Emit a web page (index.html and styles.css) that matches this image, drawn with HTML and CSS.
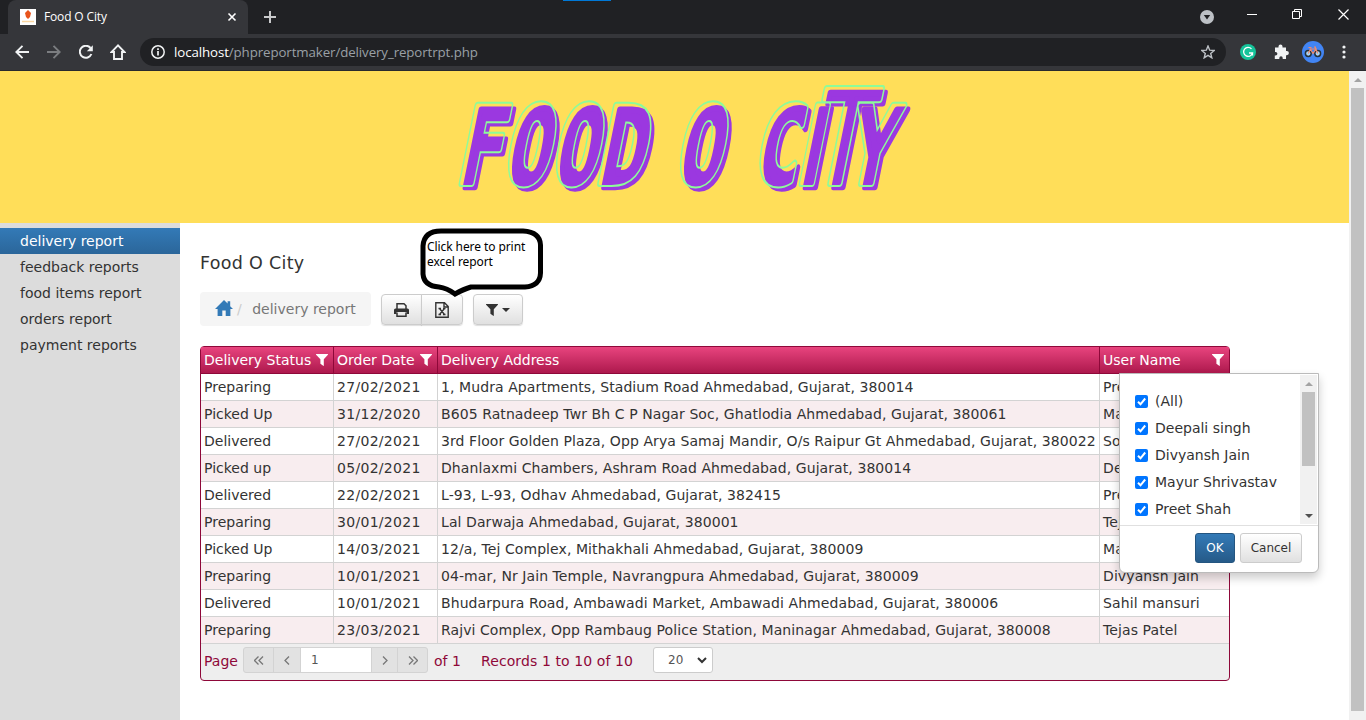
FILE: index.html
```html
<!DOCTYPE html>
<html lang="en">
<head>
<meta charset="utf-8">
<title>Food O City</title>
<link rel="stylesheet" href="styles.css">
</head>
<body>
<svg class="defs" width="0" height="0">
  <defs>
    <path id="funnel" d="M.3 0h11.400c.4 0 .4.5.2.8L7.800 5.200v6.200c0 .5-.3.6-.6.4L4.400 9.700V5.200L.1.8C-.1.5 0 0 .3 0z"/>
    <g id="logo" class="logo" transform="translate(0 112) skewX(-11.5)">
      <text x="-4" y="0" textLength="44" lengthAdjust="spacingAndGlyphs">F</text>
      <text x="43" y="0" textLength="45" lengthAdjust="spacingAndGlyphs">O</text>
      <text x="91" y="0" textLength="45" lengthAdjust="spacingAndGlyphs">O</text>
      <text x="136" y="0" textLength="47" lengthAdjust="spacingAndGlyphs">D</text>
      <text x="215" y="0" textLength="45" lengthAdjust="spacingAndGlyphs">O</text>
      <text x="292" y="0" textLength="45" lengthAdjust="spacingAndGlyphs">C</text>
      <text class="plain" x="338" y="0" textLength="20" lengthAdjust="spacingAndGlyphs">I</text>
      <text class="tall" x="346" y="0" textLength="60" lengthAdjust="spacingAndGlyphs">T</text>
      <text x="385" y="0" textLength="45" lengthAdjust="spacingAndGlyphs">Y</text>
    </g>
    <mask id="rim" maskUnits="userSpaceOnUse" x="-10" y="0" width="490" height="140">
      <rect x="-10" width="490" height="140" fill="#fff"/>
      <use href="#logo" class="logo-cut"/>
    </mask>
  </defs>
</svg>
<div class="browser">
  <div class="tabs">
    <div class="tab">
      <svg width="16" height="16"><rect width="16" height="16" fill="#fff"/><path d="M8 1l3 3-1 4-2 2-2-2-1-4z" fill="#e8541c"/><path d="M2 12.500h12" stroke="#fbd6a0" stroke-width="1.500"/></svg>
      <span class="tab-title">Food O City</span>
      <svg width="10" height="10"><path d="M1.500 1.500l7 7m0-7l-7 7" stroke="#fff" stroke-width="1.600"/></svg>
    </div>
    <svg class="plus" width="12" height="12"><path d="M6 0v12M0 6h12" stroke="#c9cacc" stroke-width="2"/></svg>
    <div class="wincontrols">
      <svg width="14" height="14"><circle cx="7" cy="7" r="7" fill="#bdc1c6"/><path d="M3.800 5h6.400L7 9.500z" fill="#202124"/></svg>
      <svg width="10" height="10"><path d="M0 4.500h10" stroke="#fff"/></svg>
      <svg width="11" height="11"><path d="M.5 2.500h7v7h-7zM2.500 2.500v-2h7v7h-2" fill="none" stroke="#fff"/></svg>
      <svg width="11" height="11"><path d="M.5.5l10 10m0-10l-10 10" stroke="#fff" stroke-width="1.200"/></svg>
    </div>
    <div class="strip"></div>
  </div>
  <div class="toolbar">
    <svg width="14" height="14"><path d="M14 7H1.500M7.500.8L1.300 7l6.200 6.200" fill="none" stroke="#f1f3f4" stroke-width="1.900"/></svg>
    <svg width="14" height="14"><path d="M0 7h12.500M6.500.8L12.700 7l-6.200 6.200" fill="none" stroke="#7b7d80" stroke-width="1.900"/></svg>
    <svg width="14" height="14"><path d="M12.400 9A6 6 0 1 1 11.500 3" fill="none" stroke="#f1f3f4" stroke-width="2"/><path d="M13.800.3v6H7.800z" fill="#f1f3f4"/></svg>
    <svg width="16" height="16"><path d="M8 1.400L1.500 8H4v7h8V8h2.500z" fill="none" stroke="#f1f3f4" stroke-width="1.900"/></svg>
    <div class="omnibox">
      <svg width="14" height="14"><circle cx="7" cy="7" r="6.200" fill="none" stroke="#f1f3f4" stroke-width="1.500"/><path d="M7 6v4.500M7 3.200v1.700" stroke="#f1f3f4" stroke-width="1.700"/></svg>
      <span class="url"><b>localhost</b>/phpreportmaker/delivery_reportrpt.php</span>
      <svg width="14" height="14"><path d="M7 1l1.700 4.200 4.500.3-3.500 2.900 1.100 4.400L7 10.400l-3.800 2.400 1.100-4.400L.8 5.500l4.500-.3z" fill="none" stroke="#bdc1c6" stroke-width="1.400"/></svg>
    </div>
    <div class="extensions">
      <svg width="16" height="16"><circle cx="8" cy="8" r="8" fill="#15c39a"/><path d="M11.500 4.900A4.500 4.500 0 1 0 12.500 9H9M12.500 8.500v3" fill="none" stroke="#fff" stroke-width="1.300"/></svg>
      <svg width="15" height="16"><path d="M1 3.500h3.500v-1a2 2 0 0 1 4 0v1H12V7h.8a2 2 0 0 1 0 4.200H12V15H8.700v-1a1.700 1.700 0 0 0-3.400 0v1H.8v-3.500h.8a1.800 1.800 0 0 0 0-3.600H1z" fill="#f1f3f4"/></svg>
      <svg width="22" height="22"><circle cx="11" cy="11" r="11" fill="#4285f4"/><g fill="#a8d4f5" stroke="#263238" stroke-width="1.500"><circle cx="6.300" cy="12.500" r="2.900"/><circle cx="15.700" cy="12.500" r="2.900"/></g><path d="M6.300 12.500L8.500 8h5.500l-3 4.500L8 7.500M13 6l2.700 6.500M6.500 6.500h3M12 6h2" fill="none" stroke="#f08a6a" stroke-width="1.200"/></svg>
      <svg width="4" height="14"><g fill="#f1f3f4"><circle cx="2" cy="2" r="1.600"/><circle cx="2" cy="7" r="1.600"/><circle cx="2" cy="12" r="1.600"/></g></svg>
    </div>
  </div>
</div>
<div class="viewport">
  <div class="page">
    <header class="banner">
      <svg width="470" height="140">
        <use href="#logo" x="3.500" y="4" class="logo-fill"/>
        <g mask="url(#rim)"><use href="#logo" class="logo-line"/></g>
      </svg>
    </header>
    <div class="body">
      <nav class="menu">
        <a class="item active">delivery report</a>
        <a class="item">feedback reports</a>
        <a class="item">food items report</a>
        <a class="item">orders report</a>
        <a class="item">payment reports</a>
      </nav>
      <main class="content">
        <h1 class="title">Food O City</h1>
        <div class="tools">
          <div class="crumb">
            <svg width="18" height="16"><path d="M9 0l3.600 3.600V1.200h2.600v5L18 9h-2.600v7h-4.700v-5.500H7.300V16H2.600V9H0z" fill="#337ab7"/></svg>
            <span class="slash">/</span><span>delivery report</span>
          </div>
          <div class="group">
            <button class="btn"><svg width="15" height="14"><path d="M3 6V.8h7l2 2V6" fill="none" stroke="#333" stroke-width="1.500"/><path d="M1.500 5.500h12Q15 5.500 15 7v4h-2.500V9h-10v2H0V7q0-1.500 1.500-1.500z" fill="#333"/><path d="M3 9.500v3.700h9V9.500" fill="none" stroke="#333" stroke-width="1.500"/></svg></button>
            <button class="btn"><svg width="14" height="16"><path d="M.8.8h8.700l3.700 3.700v10.700H.8zM9 1v4h4" fill="none" stroke="#333" stroke-width="1.400"/><path d="M4.500 6.500l5 6M9.500 6.500l-5 6M3.500 6.500H6M8 6.500h2.500M3.500 12.500H6M8 12.500h2.500" stroke="#333" stroke-width="1.300"/></svg></button>
          </div>
          <button class="btn filter"><svg width="12" height="12" fill="#333"><use href="#funnel"/></svg><i class="caret"></i></button>
        </div>
        <div class="grid">
          <table class="report">
            <colgroup><col class="c1"><col class="c2"><col class="c3"><col class="c4"></colgroup>
            <thead><tr>
              <th><div class="head">Delivery Status<svg width="12" height="12"><use href="#funnel"/></svg></div></th>
              <th><div class="head">Order Date<svg width="12" height="12"><use href="#funnel"/></svg></div></th>
              <th>Delivery Address</th>
              <th><div class="head last">User Name<svg width="12" height="12"><use href="#funnel"/></svg></div></th>
            </tr></thead>
            <tbody>
              <tr><td>Preparing</td><td>27/02/2021</td><td>1, Mudra Apartments, Stadium Road Ahmedabad, Gujarat, 380014</td><td>Preet Shah</td></tr>
              <tr><td>Picked Up</td><td>31/12/2020</td><td>B605 Ratnadeep Twr Bh C P Nagar Soc, Ghatlodia Ahmedabad, Gujarat, 380061</td><td>Mayur</td></tr>
              <tr><td>Delivered</td><td>27/02/2021</td><td>3rd Floor Golden Plaza, Opp Arya Samaj Mandir, O/s Raipur Gt Ahmedabad, Gujarat, 380022</td><td>Sonal</td></tr>
              <tr><td>Picked up</td><td>05/02/2021</td><td>Dhanlaxmi Chambers, Ashram Road Ahmedabad, Gujarat, 380014</td><td>Deepali</td></tr>
              <tr><td>Delivered</td><td>22/02/2021</td><td>L-93, L-93, Odhav Ahmedabad, Gujarat, 382415</td><td>Preet Shah</td></tr>
              <tr><td>Preparing</td><td>30/01/2021</td><td>Lal Darwaja Ahmedabad, Gujarat, 380001</td><td>Tejas Patel</td></tr>
              <tr><td>Picked Up</td><td>14/03/2021</td><td>12/a, Tej Complex, Mithakhali Ahmedabad, Gujarat, 380009</td><td>Mayur</td></tr>
              <tr><td>Preparing</td><td>10/01/2021</td><td>04-mar, Nr Jain Temple, Navrangpura Ahmedabad, Gujarat, 380009</td><td>Divyansh Jain</td></tr>
              <tr><td>Delivered</td><td>10/01/2021</td><td>Bhudarpura Road, Ambawadi Market, Ambawadi Ahmedabad, Gujarat, 380006</td><td>Sahil mansuri</td></tr>
              <tr><td>Preparing</td><td>23/03/2021</td><td>Rajvi Complex, Opp Rambaug Police Station, Maninagar Ahmedabad, Gujarat, 380008</td><td>Tejas Patel</td></tr>
            </tbody>
          </table>
          <div class="pager">
            <span class="label">Page</span>
            <div class="pages">
              <span class="pg wide"><svg width="10" height="9"><path d="M4.500.5l-4 4 4 4M9 .5l-4 4 4 4"/></svg></span>
              <span class="pg"><svg width="6" height="9"><path d="M5 .5l-4 4 4 4"/></svg></span>
              <span class="num">1</span>
              <span class="pg"><svg width="6" height="9"><path d="M1 .5l4 4-4 4"/></svg></span>
              <span class="pg wide"><svg width="10" height="9"><path d="M1 .5l4 4-4 4M5.500.5l4 4-4 4"/></svg></span>
            </div>
            <span class="of">of 1</span>
            <span class="records">Records 1 to 10 of 10</span>
            <span class="size">20<svg width="10" height="7"><path d="M1 1l4 4 4-4" fill="none" stroke="#333" stroke-width="2"/></svg></span>
          </div>
          <div class="popup">
            <div class="options">
              <div class="list">
                <div class="opt"><i class="check"><svg width="13" height="13"><path d="M3 6.800l2.500 2.500L10.200 3.500"/></svg></i>(All)</div>
                <div class="opt"><i class="check"><svg width="13" height="13"><path d="M3 6.800l2.500 2.500L10.200 3.500"/></svg></i>Deepali singh</div>
                <div class="opt"><i class="check"><svg width="13" height="13"><path d="M3 6.800l2.500 2.500L10.200 3.500"/></svg></i>Divyansh Jain</div>
                <div class="opt"><i class="check"><svg width="13" height="13"><path d="M3 6.800l2.500 2.500L10.200 3.500"/></svg></i>Mayur Shrivastav</div>
                <div class="opt"><i class="check"><svg width="13" height="13"><path d="M3 6.800l2.500 2.500L10.200 3.500"/></svg></i>Preet Shah</div>
              </div>
              <div class="bar inner"><i class="up"></i><i class="thumb"></i><i class="down"></i></div>
            </div>
            <div class="actions"><button class="ok">OK</button><button class="cancel">Cancel</button></div>
          </div>
        </div>
        <div class="callout">
          <svg width="126" height="72"><path d="M4 19Q5 4 22 4H104Q121 5 121.500 18V46Q121 59 106 60H52Q45 62 36 67Q28 61 20 60Q5 59 4 47z" fill="#fff" stroke="#000" stroke-width="5"/></svg>
          <p class="note">Click here to print<br>excel report</p>
        </div>
      </main>
    </div>
  </div>
  <div class="bar outer"><i class="up"></i><i class="thumb"></i></div>
</div>
</body>
</html>
```

FILE: styles.css
```css
* { box-sizing: border-box; }
body { margin: 0; height: 720px; overflow: hidden; display: flex; flex-direction: column; background: #fff; color: #333; font: 14px/20px "DejaVu Sans", sans-serif; }
svg { display: block; flex: none; }
.defs { position: absolute; }
.browser { flex: none; height: 71px; background: #35363a; border-bottom: 1px solid #292a2d; font-family: "Open Sans", sans-serif; }
.tabs { position: relative; height: 34px; padding-left: 8px; display: flex; align-items: center; background: #202124; }
.tab { width: 240px; height: 34px; padding: 0 11px 0 12px; display: flex; align-items: center; gap: 8px; border-radius: 8px 8px 0 0; background: #35363a; }
.tab-title { flex: 1; color: #fff; font-size: 12px; letter-spacing: -.15px; }
.plus { margin-left: 16px; }
.wincontrols { margin-left: auto; padding-right: 17px; display: flex; align-items: center; gap: 35px; height: 29px; align-self: flex-start; }
.wincontrols svg:first-child { margin: 5px -2px 0 0; }
.strip { position: absolute; left: 563px; top: 0; width: 48px; height: 1px; background: #0078d7; }
.toolbar { height: 36px; padding-left: 15px; display: flex; align-items: center; gap: 18px; }
.toolbar > svg:nth-child(4) { margin-left: -1px; }
.omnibox { width: 1086px; height: 28px; margin-left: -4px; padding: 0 11px; border-radius: 14px; display: flex; align-items: center; gap: 9px; background: #202124; }
.url { flex: 1; color: #9aa0a6; font-size: 13.300px; letter-spacing: -.1px; }
.url b { color: #fff; font-weight: 400; }
.extensions { flex: 1; display: flex; align-items: center; padding: 0 20px 0 0; margin-left: -4px; justify-content: space-between; }
.extensions svg:nth-child(3) { margin-left: -4px; }
.viewport { flex: 1; display: flex; min-height: 0; }
.page { flex: 1; display: flex; flex-direction: column; }
.banner { height: 152px; flex: none; padding-left: 459px; background: #ffde59; }
.banner svg { overflow: visible; }
.logo { font: 700 106px "DejaVu Sans Mono", monospace; stroke-linejoin: round; }
.plain { font: 900 109px Roboto, sans-serif; }
.tall { font: 400 132px Roboto, sans-serif; }
.logo-fill { fill: #9b38e0; stroke: #9b38e0; stroke-width: 6.500px; }
.logo-line { fill: #8dfb9a; stroke: #8dfb9a; stroke-width: 8px; }
.logo-cut { fill: #000; stroke: #000; stroke-width: 4px; }
.body { flex: 1; display: flex; }
.menu { width: 180px; padding-top: 5px; background: #dcdcdc; }
.item { display: block; height: 26px; padding-left: 20px; line-height: 26px; }
.active { color: #fff; background: linear-gradient(#337ab7, #2b669a); }
.content { flex: 1; position: relative; padding: 30px 0 0 20px; }
.title { margin: 0; font-size: 17.500px; line-height: 20px; font-weight: 400; letter-spacing: .3px; }
.tools { display: flex; gap: 10px; margin: 19px 0 20px; }
.crumb { width: 171px; height: 34px; padding-left: 15px; display: flex; align-items: center; border-radius: 4px; background: #f5f5f5; color: #777; }
.crumb svg { margin-bottom: 3px; }
.slash { color: #ccc; padding: 0 10.500px 0 4px; }
.group { display: flex; }
.btn { width: 41px; height: 31px; margin-top: 2px; padding: 0; display: flex; align-items: center; justify-content: center; border: 1px solid #ccc; background: linear-gradient(#fff, #e0e0e0); border-radius: 4px; box-shadow: 0 1px 1px #0002; }
.group .btn:first-child { border-radius: 4px 0 0 4px; }
.group .btn:last-child { width: 42px; margin-left: -1px; border-radius: 0 4px 4px 0; }
.filter { width: 50px; gap: 4px; }
.caret { border: 4px solid transparent; border-top-color: #333; border-bottom: 0; }
.grid { position: relative; width: 1030px; height: 335px; border: 1px solid #8e0839; border-radius: 4px; background: #eee; }
.report { width: 1028px; table-layout: fixed; border-collapse: separate; border-spacing: 0; white-space: nowrap; }
.c1 { width: 133px; } .c2 { width: 104px; } .c3 { width: 662px; } .c4 { width: 129px; }
.report th { height: 27px; padding: 0 3px; border-right: 1px solid #8e0839; border-bottom: 1px solid #8e0839; text-align: left; font-weight: 400; color: #fff; }
.report thead tr { background: linear-gradient(#e8447e, #ab174b); }
.report td { height: 27px; padding: 0 3px; background: #fff; border-right: 1px solid #d3d3d3; border-bottom: 1px solid #d3d3d3; }
.report td:nth-child(2) { letter-spacing: .3px; }
.report td:nth-child(3) { letter-spacing: .08px; }
.report td:nth-child(4) { letter-spacing: .1px; }
.report tr > :last-child { border-right: 0; }
.report tbody tr:nth-child(even) td { background: #f8edef; }
.head { display: flex; align-items: center; gap: 5px; fill: #fff; }
.last { justify-content: space-between; padding-right: 2px; }
.pager { height: 36px; padding: 3px 0 7px 3px; display: flex; align-items: center; color: #8e0839; }
.label { width: 39px; }
.label, .of, .records { padding-top: 1px; }
.pages { display: flex; height: 26px; border: 1px solid #d3d3d3; border-radius: 3px; background: #e2e2e2; }
.pg { width: 26px; display: flex; align-items: center; justify-content: center; }
.wide { width: 30px; }
.pages .pg:first-child, .pages .pg:nth-child(4) { border-right: 1px solid #d3d3d3; }
.pg path { fill: none; stroke: #777; stroke-width: 1.300; }
.num { width: 72px; padding-left: 10px; border: solid #d3d3d3; border-width: 0 1px; background: #fff; color: #555; font-size: 12px; line-height: 25px; }
.pages .wide:last-child { width: 29px; }
.of { margin-left: 6px; width: 47px; }
.records { width: 172px; letter-spacing: .1px; }
.size { width: 60px; height: 26px; padding: 0 5px 0 14px; display: flex; align-items: center; justify-content: space-between; border: 1px solid #ccc; border-radius: 3px; background: #fff; color: #555; font-size: 12px; }
.popup { position: absolute; left: 918px; top: 26px; width: 200px; height: 200px; border: 1px solid #bbb; border-radius: 0 0 6px 6px; background: #fff; box-shadow: 0 5px 10px #0003; }
.options { height: 152px; padding: 1px; display: flex; justify-content: space-between; border-bottom: 1px solid #e0e0e0; }
.list { padding: 12px 0 0 14px; }
.opt { display: flex; align-items: center; gap: 7px; height: 27px; white-space: nowrap; }
.check { width: 13px; height: 13px; margin-top: 2px; border-radius: 2px; background: #0075ff; }
.check path { fill: none; stroke: #fff; stroke-width: 2; }
.bar { display: flex; flex-direction: column; align-items: center; background: #f1f1f1; }
.bar i { flex: none; }
.up { margin: 7px 0 6px; border: 4px solid transparent; border-bottom-color: #a3a3a3; border-top: 0; }
.down { margin: auto 0 6px; border: 4px solid transparent; border-top-color: #505050; border-bottom: 0; }
.inner { width: 17px; }
.thumb { width: 13px; height: 74px; background: #c1c1c1; }
.outer { width: 17px; }
.outer .thumb { height: 623px; }
.actions { display: flex; justify-content: flex-end; gap: 5px; padding: 7px 16px 0 0; }
.actions button { height: 30px; padding: 0; border-radius: 3px; font: 12px "DejaVu Sans", sans-serif; }
.ok { width: 40px; color: #fff; border: 1px solid #245580; background: linear-gradient(#337ab7, #265a88); }
.cancel { width: 62px; color: #333; border: 1px solid #ccc; background: linear-gradient(#fff, #e0e0e0); }
.callout { position: absolute; left: 239px; top: 4px; width: 126px; height: 72px; }
.note { position: absolute; left: 8px; top: 12px; margin: 0; color: #000; font: 12px/15px "Noto Sans", sans-serif; letter-spacing: -.08px; white-space: nowrap; }
```
